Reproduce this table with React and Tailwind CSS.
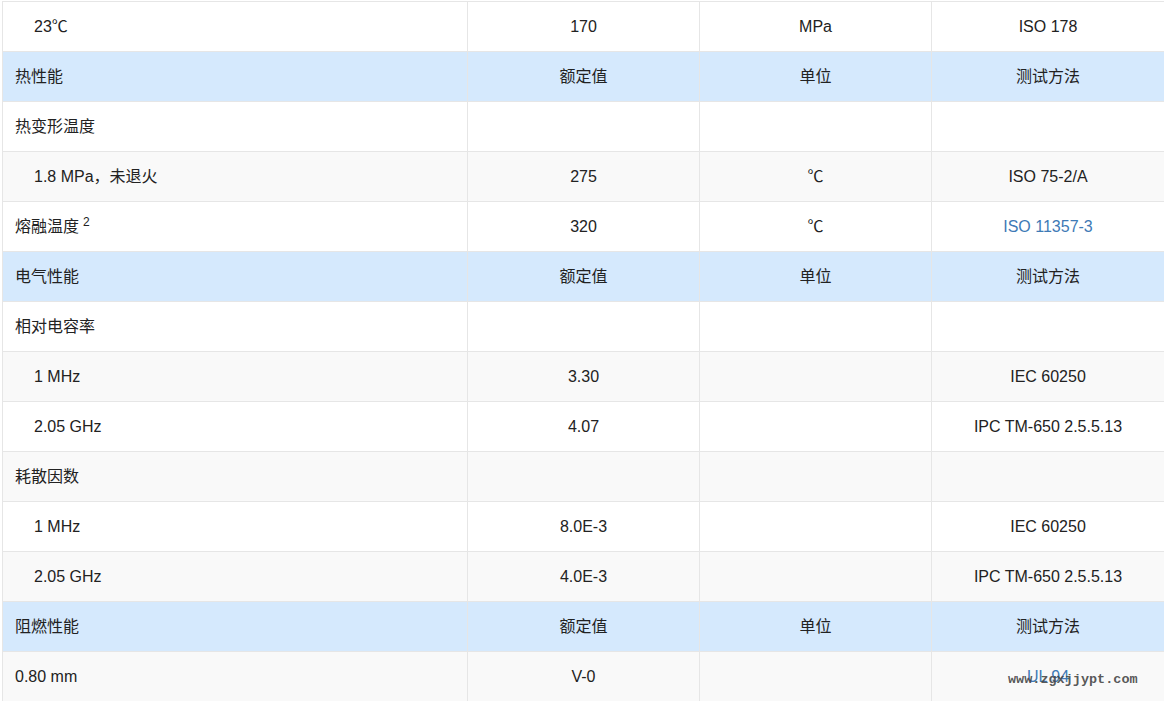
const rows = [
  { type: 'row', cells: ['23℃', '170', 'MPa', 'ISO 178'], indent: true },
  { type: 'head', cells: ['热性能', '额定值', '单位', '测试方法'] },
  { type: 'row', cells: ['热变形温度', '', '', ''] },
  { type: 'row', cells: ['1.8 MPa，未退火', '275', '℃', 'ISO 75-2/A'], indent: true },
  { type: 'row', cells: ['熔融温度', '320', '℃', 'ISO 11357-3'], sup: '2', link: true },
  { type: 'head', cells: ['电气性能', '额定值', '单位', '测试方法'] },
  { type: 'row', cells: ['相对电容率', '', '', ''] },
  { type: 'row', cells: ['1 MHz', '3.30', '', 'IEC 60250'], indent: true },
  { type: 'row', cells: ['2.05 GHz', '4.07', '', 'IPC TM-650 2.5.5.13'], indent: true },
  { type: 'row', cells: ['耗散因数', '', '', ''] },
  { type: 'row', cells: ['1 MHz', '8.0E-3', '', 'IEC 60250'], indent: true },
  { type: 'row', cells: ['2.05 GHz', '4.0E-3', '', 'IPC TM-650 2.5.5.13'], indent: true },
  { type: 'head', cells: ['阻燃性能', '额定值', '单位', '测试方法'] },
  { type: 'row', cells: ['0.80 mm', 'V-0', '', 'UL 94'], link: true },
]

export default function App() {
  return (
    <div
      className="relative h-[701px] w-[1164px] overflow-hidden bg-white pl-[2px] pt-[1px] text-[16px] text-[#222]"
      style={{ fontFamily: '"Liberation Sans", "Noto Sans CJK SC", sans-serif' }}
    >
      <table className="w-[1162px] table-fixed border-collapse">
        <colgroup>
          <col className="w-[465px]" />
          <col className="w-[232px]" />
          <col className="w-[232px]" />
          <col className="w-[233px]" />
        </colgroup>
        <tbody>
          {rows.map((r, i) => {
            const bg = r.type === 'head' ? 'bg-[#d5e9fd]' : i % 2 === 1 ? 'bg-[#f9f9f9]' : 'bg-white'
            return (
              <tr key={i} className={bg}>
                <td className={`h-[50px] border border-[#e6e6e6] p-0 ${r.indent ? 'pl-[31px]' : 'pl-[12px]'}`}>
                  {r.cells[0]}
                  {r.sup && <sup className="ml-[4px] text-[12px]">{r.sup}</sup>}
                </td>
                {r.cells.slice(1).map((c, j) => (
                  <td
                    key={j}
                    className={`h-[50px] border border-[#e6e6e6] p-0 text-center ${
                      r.link && j === 2 ? 'text-[#3e7ab6]' : ''
                    }`}
                  >
                    {c}
                  </td>
                ))}
              </tr>
            )
          })}
        </tbody>
      </table>

      {/* watermark */}
      <div
        className="absolute left-[1008px] top-[670px] text-[13.5px] font-bold text-[#444]/90"
        style={{ fontFamily: '"Liberation Mono", monospace' }}
      >
        www.zgxjjypt.com
      </div>
    </div>
  )
}
